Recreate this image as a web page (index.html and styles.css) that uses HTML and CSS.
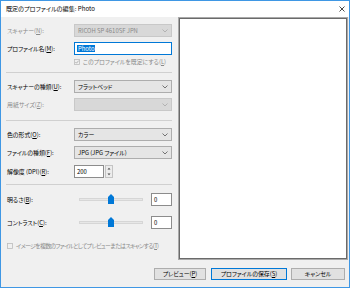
FILE: index.html
```html
<!DOCTYPE html>
<html lang="ja">
<head>
<meta charset="utf-8">
<title>既定のプロファイルの編集</title>
<link rel="stylesheet" href="styles.css">
</head>
<body>
<div class="window">
  <div class="titlebar">
    <span class="title">既定のプロファイルの編集: Photo</span>
    <svg class="close" viewBox="0 0 6 6"><path d="M0.5 0.5L5.5 5.5M5.5 0.5L0.5 5.5" stroke="#333" stroke-width="0.9" fill="none"/></svg>
  </div>
  <div class="content">
    <div class="main">
      <div class="form">
        <div class="row mt7">
          <span class="label dim">スキャナー(<u>N</u>):</span>
          <div class="ctl combo disabled"><span>RICOH SP 4610SF JPN</span><svg class="chev" viewBox="0 0 6 4"><path d="M0.5 0.5L3 3L5.5 0.5" stroke="#a8a8a8" stroke-width="0.8" fill="none"/></svg></div>
        </div>
        <div class="row mt5">
          <span class="label">プロファイル名(<u>M</u>):</span>
          <div class="ctl textbox focus"><span class="sel">Photo</span></div>
        </div>
        <div class="row check-row mt2">
          <span class="label"></span>
          <div class="checkline dim">
            <svg class="cbox" viewBox="0 0 6 6"><rect x="0.5" y="0.5" width="5" height="5" fill="#f0f0f0" stroke="#bcbcbc" stroke-width="0.8"/><path d="M1.4 3L2.5 4.2L4.7 1.6" stroke="#a2a2a2" stroke-width="0.8" fill="none"/></svg>
            <span>このプロファイルを既定にする(<u>L</u>)</span>
          </div>
        </div>
        <div class="sep mt6"></div>
        <div class="row mt7">
          <span class="label">スキャナーの種類(<u>U</u>):</span>
          <div class="ctl combo"><span>フラットベッド</span><svg class="chev" viewBox="0 0 6 4"><path d="M0.5 0.5L3 3L5.5 0.5" stroke="#555" stroke-width="0.8" fill="none"/></svg></div>
        </div>
        <div class="row mt5">
          <span class="label dim">用紙サイズ(<u>Z</u>):</span>
          <div class="ctl combo disabled"><span></span><svg class="chev" viewBox="0 0 6 4"><path d="M0.5 0.5L3 3L5.5 0.5" stroke="#a8a8a8" stroke-width="0.8" fill="none"/></svg></div>
        </div>
        <div class="sep mt9"></div>
        <div class="row mt7">
          <span class="label">色の形式(<u>O</u>):</span>
          <div class="ctl combo"><span>カラー</span><svg class="chev" viewBox="0 0 6 4"><path d="M0.5 0.5L3 3L5.5 0.5" stroke="#555" stroke-width="0.8" fill="none"/></svg></div>
        </div>
        <div class="row mt5">
          <span class="label">ファイルの種類(<u>F</u>):</span>
          <div class="ctl combo"><span>JPG (JPG ファイル)</span><svg class="chev" viewBox="0 0 6 4"><path d="M0.5 0.5L3 3L5.5 0.5" stroke="#555" stroke-width="0.8" fill="none"/></svg></div>
        </div>
        <div class="row mt6">
          <span class="label">解像度 (DPI)(<u>R</u>):</span>
          <div class="ctl spin">
            <div class="textbox spin-input"><span>200</span></div>
            <div class="spin-btns">
              <div class="spin-btn"><svg viewBox="0 0 4 3"><path d="M0.5 2.5L2 0.8L3.5 2.5Z" fill="#444"/></svg></div>
              <div class="spin-btn"><svg viewBox="0 0 4 3"><path d="M0.5 0.5L2 2.2L3.5 0.5Z" fill="#444"/></svg></div>
            </div>
          </div>
        </div>
        <div class="sep mt6"></div>
        <div class="row mt8">
          <span class="label">明るさ(<u>B</u>):</span>
          <div class="ctl slider-ctl">
            <div class="slider"><div class="track"></div><svg class="thumb" viewBox="0 0 6 10"><path d="M0 3L3 0L6 3V10H0Z" fill="#0078d7"/></svg></div>
            <div class="textbox num"><span>0</span></div>
          </div>
        </div>
        <div class="row mt10">
          <span class="label">コントラスト(<u>C</u>):</span>
          <div class="ctl slider-ctl">
            <div class="slider"><div class="track"></div><svg class="thumb" viewBox="0 0 6 10"><path d="M0 3L3 0L6 3V10H0Z" fill="#0078d7"/></svg></div>
            <div class="textbox num"><span>0</span></div>
          </div>
        </div>
        <div class="checkline dim multi mt12">
          <svg class="cbox" viewBox="0 0 6 6"><rect x="0.5" y="0.5" width="5" height="5" fill="#f0f0f0" stroke="#bcbcbc" stroke-width="0.8"/></svg>
          <span class="long">イメージを複数のファイルとしてプレビューまたはスキャンする(<u>T</u>)</span>
        </div>
      </div>
      <div class="preview"></div>
    </div>
    <div class="buttons">
      <div class="btn b-preview">プレビュー(<u>P</u>)</div>
      <div class="btn b-save default">プロファイルの保存(<u>S</u>)</div>
      <div class="btn b-cancel">キャンセル</div>
    </div>
  </div>
</div>
</body>
</html>
```

FILE: styles.css
```css
* { box-sizing: border-box; margin: 0; padding: 0; }
html, body { margin: 0; background: #fff; }
body {
  font-family: "Noto Sans CJK JP", "Noto Sans", sans-serif;
  font-size: 5.9px;
  font-feature-settings: "palt";
  line-height: 1;
  color: #000;
}
u { text-decoration-thickness: 0.5px; text-underline-offset: 0.8px; }

.window {
  width: 350px;
  height: 288px;
  border: 1px solid #3f97e4;
  background: #f0f0f0;
  display: flex;
  flex-direction: column;
}
.titlebar {
  height: 16px;
  background: #fff;
  display: flex;
  align-items: center;
  justify-content: space-between;
  padding: 0 4px 0 5px;
}
.title { font-size: 6.1px; }
.close { width: 6px; height: 6px; }

.content {
  flex: 1;
  display: flex;
  flex-direction: column;
  padding: 0 1px 7px 5px;
}
.main { display: flex; height: 243px; gap: 6px; }
.form { width: 166px; display: flex; flex-direction: column; }
.preview {
  width: 170px;
  background: #fff;
  border: 1px solid #a9a9a9;
  box-shadow: inset 0 0 0 1px #6a6a6a;
}

.row { display: flex; align-items: center; height: 13px; }
.label { width: 68px; white-space: nowrap; padding-left: 1px; }
.dim { color: #8a8a8a; }
.ctl { width: 98px; height: 13px; }

.mt2 { margin-top: 2px; }
.mt5 { margin-top: 5px; }
.mt6 { margin-top: 6px; }
.mt7 { margin-top: 7px; }
.mt8 { margin-top: 8px; }
.mt9 { margin-top: 9px; }
.mt10 { margin-top: 10px; }
.mt12 { margin-top: 12px; }

.combo {
  display: flex;
  align-items: center;
  justify-content: space-between;
  background: #e5e5e5;
  border: 1px solid #adadad;
  padding: 0 3px 0 3px;
}
.combo.disabled { background: #d8d8d8; border-color: #c8c8c8; color: #888; }
.chev { width: 6px; height: 4px; }

.textbox {
  display: flex;
  align-items: center;
  background: #fff;
  border: 1px solid #8c8c8c;
  padding-left: 2px;
}
.textbox.focus { border-color: #0078d7; }
.sel { background: #0078d7; color: #fff; padding: 1px 1px; }

.check-row { height: 9px; }
.checkline { display: flex; align-items: center; gap: 3px; white-space: nowrap; }
.cbox { width: 6px; height: 6px; flex: none; }
.multi { height: 9px; padding-left: 1px; }
.long { letter-spacing: -0.65px; }

.sep { height: 1px; background: #d0d0d0; flex: none; }

.spin { display: flex; }
.spin-input { width: 30px; height: 13px; }
.spin-btns {
  width: 8px;
  margin-left: 1px;
  display: flex;
  flex-direction: column;
  border: 1px solid #c4c4c4;
  background: #ececec;
}
.spin-btn { flex: 1; display: flex; align-items: center; justify-content: center; }
.spin-btn svg { width: 4px; height: 3px; }

.slider-ctl { display: flex; align-items: center; }
.slider { position: relative; width: 64px; height: 13px; margin-left: 5px; display: flex; align-items: center; }
.track { width: 100%; height: 3px; background: #e7e7e7; border: 1px solid #d6d6d6; }
.thumb { position: absolute; left: 29px; top: 1px; width: 6px; height: 10px; }
.num { width: 21px; height: 13px; margin-left: 8px; }

.buttons {
  display: flex;
  justify-content: flex-end;
  margin-top: 8px;
  padding-right: 3px;
  gap: 4px;
}
.btn {
  height: 12px;
  display: flex;
  align-items: center;
  justify-content: center;
  background: #e1e1e1;
  border: 1px solid #adadad;
  white-space: nowrap;
}
.btn.default { border-color: #0078d7; }
.b-preview { width: 52px; margin-right: 1px; }
.b-save { width: 76px; }
.b-cancel { width: 54px; }
```
